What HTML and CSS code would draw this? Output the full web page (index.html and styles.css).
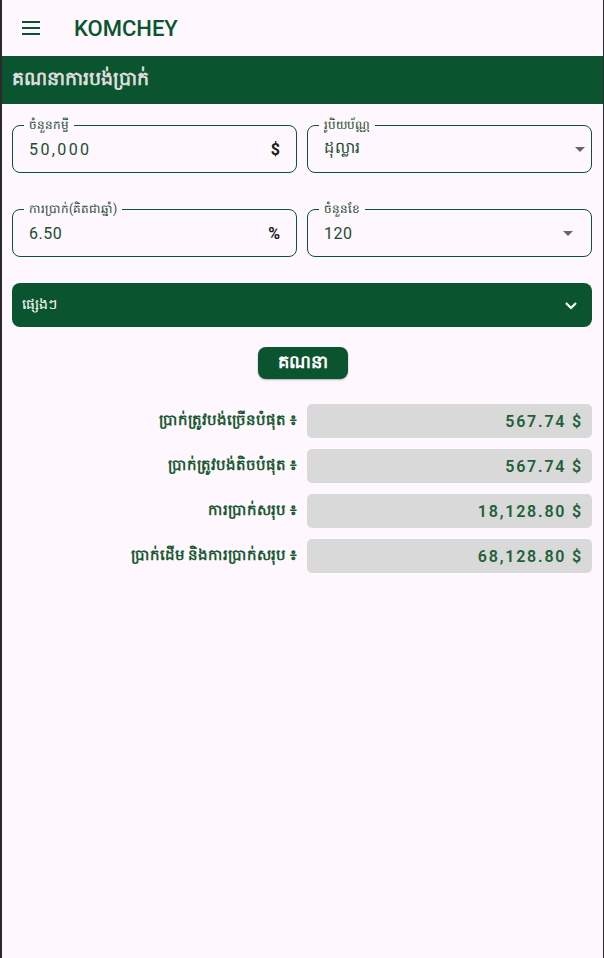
FILE: index.html
```html
<!DOCTYPE html>
<html lang="km">
<head>
    <meta charset="UTF-8">
    <meta name="viewport" content="width=device-width, initial-scale=1.0">
    <title>KOMCHEY</title>
    <link rel="stylesheet" href="styles.css">
</head>
<body>
    <div class="screen">
        <div class="app-bar">
            <button class="menu-button" aria-label="menu">
                <svg width="18" height="14" viewBox="0 0 18 14">
                    <rect x="0" y="0" width="18" height="2" fill="#0b5430"/>
                    <rect x="0" y="6" width="18" height="2" fill="#0b5430"/>
                    <rect x="0" y="12" width="18" height="2" fill="#0b5430"/>
                </svg>
            </button>
            <h1 class="app-title">KOMCHEY</h1>
        </div>

        <div class="page-header">គណនាការបង់ប្រាក់</div>

        <div class="form-grid">
            <div class="field">
                <span class="field-label">ចំនួនកម្ចី</span>
                <span class="field-value spaced">50,000</span>
                <span class="field-suffix">$</span>
            </div>
            <div class="field">
                <span class="field-label">រូបិយប័ណ្ណ</span>
                <span class="field-value">ដុល្លារ</span>
                <span class="dropdown-arrow arrow-a"></span>
            </div>
            <div class="field">
                <span class="field-label">ការប្រាក់(គិតជាឆ្នាំ)</span>
                <span class="field-value">6.50</span>
                <span class="field-suffix">%</span>
            </div>
            <div class="field">
                <span class="field-label">ចំនួនខែ</span>
                <span class="field-value">120</span>
                <span class="dropdown-arrow arrow-b"></span>
            </div>
        </div>

        <div class="other-bar">
            <span>ផ្សេងៗ</span>
            <svg width="14" height="9" viewBox="0 0 14 9">
                <path d="M2 2 L7 7 L12 2" fill="none" stroke="white" stroke-width="2.2"/>
            </svg>
        </div>

        <div class="action">
            <button class="calc-button">គណនា</button>
        </div>

        <div class="results">
            <div class="result-row">
                <span class="result-label">ប្រាក់ត្រូវបង់ច្រើនបំផុត ៖</span>
                <span class="result-value">567.74 $</span>
            </div>
            <div class="result-row">
                <span class="result-label">ប្រាក់ត្រូវបង់តិចបំផុត ៖</span>
                <span class="result-value">567.74 $</span>
            </div>
            <div class="result-row">
                <span class="result-label">ការប្រាក់សរុប ៖</span>
                <span class="result-value">18,128.80 $</span>
            </div>
            <div class="result-row">
                <span class="result-label">ប្រាក់ដើម និងការប្រាក់សរុប ៖</span>
                <span class="result-value">68,128.80 $</span>
            </div>
        </div>
    </div>
</body>
</html>
```

FILE: styles.css
```css
body {
    margin: 0;
    background-color: #2b292d;
    font-family: Roboto, "Noto Sans", sans-serif;
    height: 100vh;
}

.screen {
    margin-left: 2px;
    margin-right: 1px;
    height: 100vh;
    background-color: #fef7fd;
}

.app-bar {
    height: 56px;
    display: flex;
    align-items: center;
}

.menu-button {
    width: 40px;
    height: 40px;
    margin-left: 9px;
    border: none;
    background: none;
    padding: 0;
    display: flex;
    justify-content: center;
    align-items: center;
}

.app-title {
    margin: 0 0 0 23px;
    font-size: 22px;
    font-weight: 500;
    color: #0b5430;
}

.page-header {
    height: 48px;
    background-color: #0b5430;
    color: #dcdcdc;
    font-size: 19px;
    font-weight: 700;
    padding-left: 10px;
    display: flex;
    align-items: center;
}

.form-grid {
    display: grid;
    grid-template-columns: 1fr 1fr;
    column-gap: 10px;
    row-gap: 36px;
    padding: 21px 11px 0 10px;
}

.field {
    position: relative;
    height: 46px;
    border: 1px solid #0b5430;
    border-radius: 8px;
    display: flex;
    align-items: center;
    padding: 0 16px 0 16px;
}

.field-label {
    position: absolute;
    top: -9px;
    left: 11px;
    padding: 0 5px;
    background-color: #fef7fd;
    font-size: 12px;
    line-height: 16px;
    color: #1e4a32;
}

.field-value {
    flex: 1;
    font-size: 16px;
    color: #1b4d33;
    letter-spacing: 0.5px;
}

.field-value.spaced {
    letter-spacing: 2.4px;
}

.field-suffix {
    font-size: 16px;
    font-weight: 700;
    color: #1a1a1a;
}

.dropdown-arrow {
    width: 0;
    height: 0;
    border-left: 5px solid transparent;
    border-right: 5px solid transparent;
    border-top: 5px solid #666;
}

.arrow-a {
    margin-right: -10px;
}

.arrow-b {
    margin-right: 2px;
}

.other-bar {
    margin: 26px 11px 0 10px;
    height: 44px;
    border-radius: 8px;
    background-color: #0b5430;
    color: #ffffff;
    font-size: 14px;
    display: flex;
    justify-content: space-between;
    align-items: center;
    padding: 0 14px 0 10px;
}

.action {
    display: flex;
    justify-content: center;
    margin-top: 20px;
}

.calc-button {
    width: 90px;
    height: 32px;
    border: none;
    border-radius: 8px;
    background-color: #0b5430;
    color: #ffffff;
    font-family: inherit;
    font-size: 18px;
    font-weight: 700;
    box-shadow: 0 1px 2px rgba(0, 0, 0, 0.3);
}

.results {
    display: flex;
    flex-direction: column;
    gap: 11px;
    padding: 25px 11px 0 10px;
}

.result-row {
    display: grid;
    grid-template-columns: 1fr 1fr;
    column-gap: 10px;
    align-items: center;
}

.result-label {
    text-align: right;
    font-size: 15px;
    font-weight: 600;
    color: #1b5a35;
}

.result-value {
    height: 34px;
    border-radius: 5px;
    background-color: #d9d9d9;
    display: flex;
    justify-content: flex-end;
    align-items: center;
    padding-right: 9px;
    font-size: 16px;
    font-weight: 600;
    letter-spacing: 1.8px;
    color: #1d6139;
}
```
